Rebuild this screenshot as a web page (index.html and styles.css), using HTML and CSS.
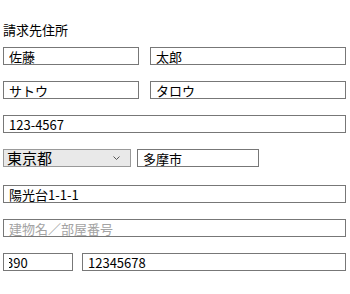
FILE: index.html
```html
<!DOCTYPE html>
<html lang="ja">
<head>
    <meta charset="UTF-8">
    <meta name="viewport" content="width=device-width, initial-scale=1.0">
    <title>請求先住所</title>
    <link rel="stylesheet" href="styles.css">
</head>
<body>
    <main class="billing">
        <h2 class="billing-title">請求先住所</h2>
        <div class="billing-rows">
            <div class="row">
                <input class="field w-last" type="text" value="佐藤">
                <input class="field grow" type="text" value="太郎">
            </div>
            <div class="row">
                <input class="field w-last" type="text" value="サトウ">
                <input class="field grow" type="text" value="タロウ">
            </div>
            <div class="row">
                <input class="field grow" type="text" value="123-4567">
            </div>
            <div class="row row-select">
                <div class="select-wrap">
                    <select class="pref">
                        <option>東京都</option>
                        <option>神奈川県</option>
                        <option>大阪府</option>
                    </select>
                    <svg class="chevron" width="7" height="4" viewBox="0 0 7 4">
                        <path d="M0.5 0.5 L3.5 3.5 L6.5 0.5" fill="none" stroke="#555" stroke-width="1"/>
                    </svg>
                </div>
                <input class="field w-city" type="text" value="多摩市">
            </div>
            <div class="row">
                <input class="field grow" type="text" value="陽光台1-1-1">
            </div>
            <div class="row">
                <input class="field grow" type="text" placeholder="建物名／部屋番号">
            </div>
            <div class="row row-phone">
                <input class="field w-area" type="text" value="390">
                <input class="field grow" type="text" value="12345678">
            </div>
        </div>
    </main>
</body>
</html>
```

FILE: styles.css
```css
body {
    margin: 0;
    font-family: "Noto Sans CJK JP", "Noto Sans", sans-serif;
    font-size: 13px;
    color: #000;
    background: #fff;
}

.billing {
    padding: 21px 4px 0 3px;
}

.billing-title {
    margin: 0 0 8px 0;
    font-size: 13px;
    font-weight: normal;
    line-height: 18px;
}

.billing-rows {
    display: flex;
    flex-direction: column;
    gap: 16px;
}

.row {
    display: flex;
    gap: 11px;
    height: 18px;
}

.row-select {
    gap: 6px;
    margin-bottom: 2px;
}

.row-phone {
    gap: 9px;
}

.field {
    box-sizing: border-box;
    height: 18px;
    margin: 0;
    padding: 0 5px;
    border: 1px solid #777;
    border-radius: 0;
    font-family: inherit;
    font-size: 13px;
    line-height: 16px;
    color: #000;
    background: #fff;
    outline: none;
}

.field::placeholder {
    color: #a3a3a3;
}

.grow {
    flex: 1;
    min-width: 0;
}

.w-last {
    width: 136px;
}

.w-city {
    width: 122px;
}

.w-area {
    width: 70px;
    text-indent: -3px;
}

.select-wrap {
    position: relative;
    width: 128px;
    height: 18px;
}

.pref {
    appearance: none;
    -webkit-appearance: none;
    box-sizing: border-box;
    width: 100%;
    height: 18px;
    margin: 0;
    padding: 0 3px;
    border: 1px solid #999;
    border-radius: 0;
    background: #e9e9e9;
    font-family: inherit;
    font-size: 15px;
    line-height: 16px;
    color: #000;
    outline: none;
}

.chevron {
    position: absolute;
    right: 11px;
    top: 7px;
    pointer-events: none;
}
```
